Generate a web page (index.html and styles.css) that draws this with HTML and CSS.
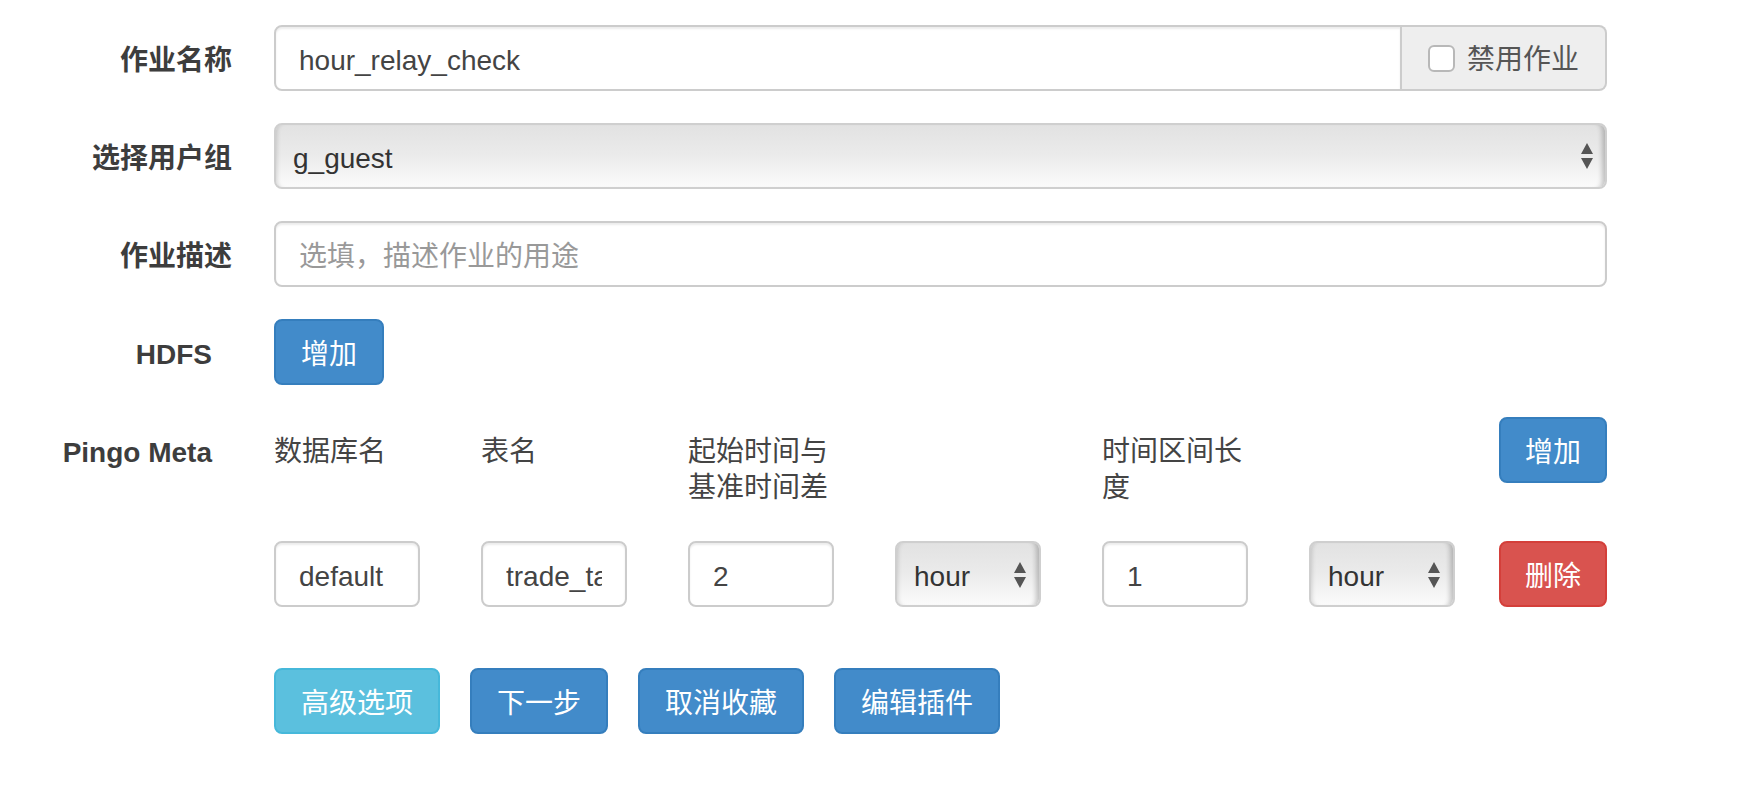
FILE: index.html
```html
<!DOCTYPE html>
<html>
<head>
    <meta charset="utf-8">
    <link rel="stylesheet" href="styles.css">
</head>
<body>
    <form class="job-form">
        <!-- Job name with disable switch -->
        <div class="form-group">
            <label class="control-label">作业名称</label>
            <div class="input-group">
                <input class="form-control" type="text" value="hour_relay_check">
                <span class="input-addon"><input type="checkbox" class="check">禁用作业</span>
            </div>
        </div>

        <!-- User group -->
        <div class="form-group">
            <label class="control-label">选择用户组</label>
            <div class="select-wrap">
                <select class="select">
                    <option>g_guest</option>
                </select>
                <svg class="select-arrows" width="12" height="26" viewBox="0 0 12 26"><path d="M6 0 L12 11 L0 11 Z M0 15 L12 15 L6 26 Z" fill="#555"/></svg>
            </div>
        </div>

        <!-- Description -->
        <div class="form-group">
            <label class="control-label">作业描述</label>
            <input class="form-control" type="text" placeholder="选填，描述作业的用途">
        </div>

        <!-- HDFS -->
        <div class="form-group">
            <label class="control-label latin">HDFS</label>
            <div><button type="button" class="btn btn-primary">增加</button></div>
        </div>

        <!-- Pingo Meta table -->
        <div class="form-group meta-group">
            <label class="control-label latin">Pingo Meta</label>
            <div class="meta-table">
                <div class="cell meta-head">数据库名</div>
                <div class="cell meta-head">表名</div>
                <div class="cell meta-head">起始时间与基准时间差</div>
                <div class="cell meta-head"></div>
                <div class="cell meta-head">时间区间长度</div>
                <div class="cell meta-head"></div>
                <button type="button" class="btn btn-primary meta-btn">增加</button>

                <input class="cell form-control" type="text" value="default">
                <input class="cell form-control" type="text" value="trade_table">
                <input class="cell form-control" type="text" value="2">
                <div class="cell select-wrap">
                    <select class="select select-sm"><option>hour</option></select>
                    <svg class="select-arrows small" width="12" height="26" viewBox="0 0 12 26"><path d="M6 0 L12 11 L0 11 Z M0 15 L12 15 L6 26 Z" fill="#555"/></svg>
                </div>
                <input class="cell form-control" type="text" value="1">
                <div class="cell select-wrap">
                    <select class="select select-sm"><option>hour</option></select>
                    <svg class="select-arrows small" width="12" height="26" viewBox="0 0 12 26"><path d="M6 0 L12 11 L0 11 Z M0 15 L12 15 L6 26 Z" fill="#555"/></svg>
                </div>
                <button type="button" class="btn btn-danger meta-btn">删除</button>
            </div>
        </div>

        <!-- Actions -->
        <div class="actions">
            <button type="button" class="btn btn-info">高级选项</button>
            <button type="button" class="btn btn-primary">下一步</button>
            <button type="button" class="btn btn-primary">取消收藏</button>
            <button type="button" class="btn btn-primary">编辑插件</button>
        </div>
    </form>
</body>
</html>
```

FILE: styles.css
```css
body {
    margin: 0;
    padding-top: 25px;
    background: #fff;
    color: #3d3d3d;
    font-family: "Liberation Sans", "Noto Sans CJK SC", sans-serif;
    font-size: 28px;
    line-height: 40px;
}

.form-group {
    display: grid;
    grid-template-columns: 232px 1333px;
    column-gap: 42px;
    margin-bottom: 32px;
}

.control-label {
    padding-top: 16px;
    text-align: right;
    font-weight: bold;
}

.control-label.latin {
    padding-right: 20px;
}

.form-control {
    box-sizing: border-box;
    width: 100%;
    height: 66px;
    margin: 0;
    padding: 14px 23px 8px;
    border: 2px solid #ccc;
    border-radius: 8px;
    background: #fff;
    box-shadow: inset 0 2px 2px rgba(0, 0, 0, 0.075);
    color: #444;
    font: inherit;
    outline: none;
}

.form-control::placeholder {
    color: #999;
}

.input-group {
    display: flex;
}

.input-group .form-control {
    flex: 1;
    border-radius: 8px 0 0 8px;
}

.input-addon {
    display: flex;
    align-items: center;
    gap: 12px;
    padding: 4px 26px 0;
    border: 2px solid #ccc;
    border-left: 0;
    border-radius: 0 8px 8px 0;
    background: #eee;
    color: #555;
}

.check {
    -webkit-appearance: none;
    appearance: none;
    width: 27px;
    height: 27px;
    margin: -4px 0 0;
    border: 2px solid #b8b8b8;
    border-radius: 6px;
    background: #fff;
}

.select-wrap {
    position: relative;
}

.select {
    -webkit-appearance: none;
    appearance: none;
    box-sizing: border-box;
    width: 100%;
    height: 66px;
    margin: 0;
    padding: 5px 50px 0 17px;
    border: 2px solid #cfcfcf;
    border-radius: 8px;
    background: linear-gradient(#e2e2e2, #ebebeb 50%, #fbfbfb);
    box-shadow: inset 4px 0 4px -3px rgba(0, 0, 0, 0.15), inset -8px 0 5px -5px rgba(0, 0, 0, 0.22);
    color: #333;
    font: inherit;
    outline: none;
}

.select-arrows {
    position: absolute;
    right: 14px;
    top: 20px;
    pointer-events: none;
}

.select-arrows.small {
    right: 15px;
    top: 21px;
}

.btn {
    box-sizing: border-box;
    height: 66px;
    margin: 0;
    padding: 5px 25px 0;
    border: 2px solid transparent;
    border-radius: 8px;
    color: #fff;
    font: inherit;
    cursor: pointer;
}

.btn-primary {
    background: #428bca;
    border-color: #357ebd;
}

.btn-info {
    background: #5bc0de;
    border-color: #46b8da;
}

.btn-danger {
    background: #d9534f;
    border-color: #d43f3a;
}

.meta-group {
    margin-bottom: 61px;
}

.meta-table {
    display: grid;
    grid-template-columns: repeat(5, 207px) 146px 1fr;
    row-gap: 31px;
    align-items: start;
}

.meta-table .cell {
    width: 146px;
}

.meta-head {
    padding-top: 17px;
    line-height: 36px;
    color: #444;
}

.meta-head:empty {
    height: 76px;
}

.meta-btn {
    justify-self: end;
    padding: 5px 24px 0;
}

.actions {
    display: flex;
    gap: 30px;
    margin-left: 274px;
}
```
